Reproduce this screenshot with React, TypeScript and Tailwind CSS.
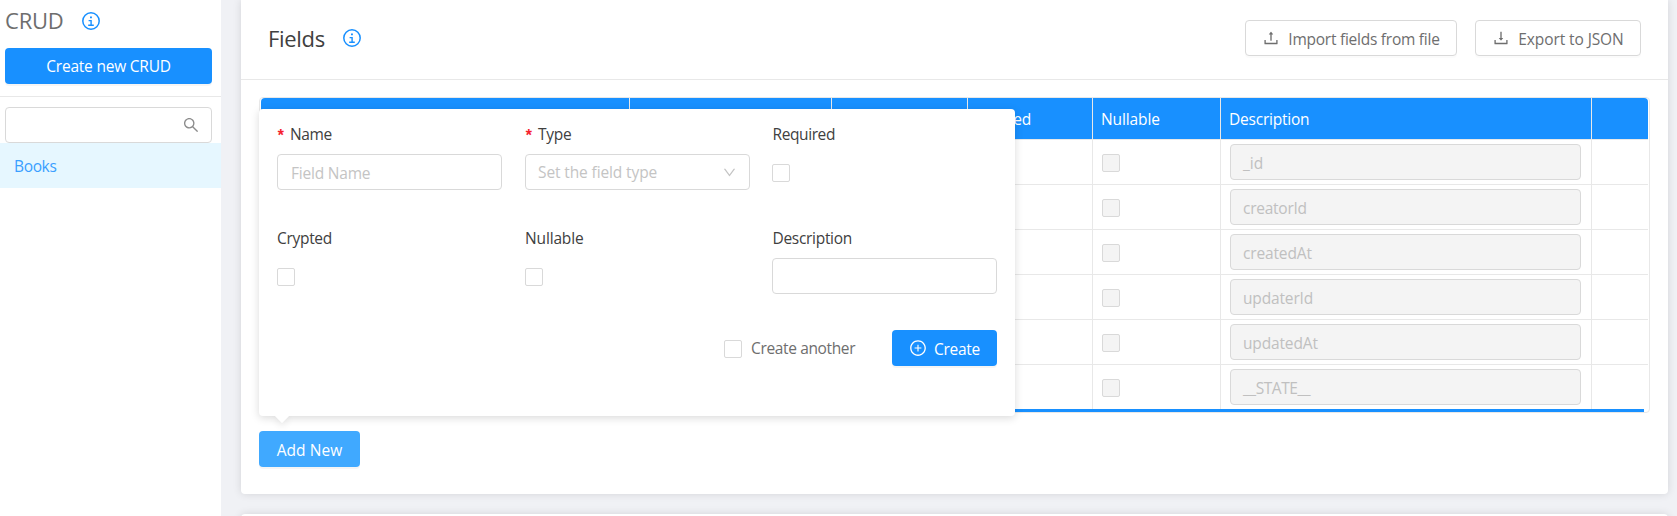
import type { ReactNode } from "react";
import {
  AiOutlineDown,
  AiOutlineDownload,
  AiOutlinePlusCircle,
  AiOutlineSearch,
  AiOutlineUpload,
} from "react-icons/ai";

const rows = [
  { name: "_id", tracking: "" },
  { name: "creatorId", tracking: "tracking-[-0.25px]" },
  { name: "createdAt", tracking: "tracking-[-0.15px]" },
  { name: "updaterId", tracking: "tracking-[-0.15px]" },
  { name: "updatedAt", tracking: "tracking-[-0.15px]" },
  { name: "__STATE__", tracking: "tracking-[-0.45px]" },
];

const columns = "grid grid-cols-[369px_202px_136px_125px_128px_371px_56px]";

const headers = [
  { id: "name", label: "", tracking: "" },
  { id: "type", label: "", tracking: "" },
  { id: "required", label: "", tracking: "" },
  { id: "crypted", label: "Crypted", tracking: "tracking-[-0.3px]" },
  { id: "nullable", label: "Nullable", tracking: "tracking-[-0.1px]" },
  { id: "description", label: "Description", tracking: "tracking-[-0.22px]" },
  { id: "actions", label: "", tracking: "" },
];

function InfoIcon() {
  return (
    <svg className="size-[18px] text-[#1890ff]" viewBox="0 0 18 18" fill="none" stroke="currentColor">
      <circle cx="9" cy="9" r="8.2" strokeWidth="1.5" />
      <path d="M8 5.4h1.9" strokeWidth="1.8" />
      <path d="M6.6 8.6h2.5v4.6M6.2 13.2h5.6" strokeWidth="1.4" />
    </svg>
  );
}

function Checkbox({ disabled = false }: { disabled?: boolean }) {
  return (
    <span
      role="checkbox"
      aria-checked="false"
      className={`block size-[18px] shrink-0 rounded-[2px] border border-[#d9d9d9] ${disabled ? "bg-[#f4f4f4]" : "bg-white"}`}
    />
  );
}

function OutlineButton({ icon, children }: { icon: ReactNode; children: ReactNode }) {
  return (
    <button className="flex h-9 items-center gap-[7px] rounded-[4px] border border-[#d9d9d9] bg-white px-4 whitespace-nowrap text-[#6e6e6e] shadow-[0_2px_0_rgba(0,0,0,0.016)]">
      {icon}
      {children}
    </button>
  );
}

function Field({ label, required = false, children }: { label: ReactNode; required?: boolean; children: ReactNode }) {
  return (
    <div className="h-[104px]">
      <div className="mb-0.5 flex h-9 items-center text-[#404040]">
        {required && (
          <span className="w-[13px] pt-[6px] font-['Liberation_Mono'] text-[16px] font-bold text-[#f5222d]">
            <span className="-ml-[1px]">*</span>
          </span>
        )}
        {label}
      </div>
      {children}
    </div>
  );
}

function FieldPopover() {
  return (
    <div className="absolute bottom-[51px] left-0 h-[307px] w-[756px]">
      <div className="absolute -bottom-[5px] left-[18px] size-[10px] rotate-45 bg-white shadow-[3px_3px_7px_rgba(0,0,0,0.07)]" />
      <div className="relative h-full rounded-[4px] bg-white px-[18px] pt-[7px] shadow-[0_2px_9px_rgba(0,0,0,0.15)]">
        <div className="absolute -bottom-[5px] left-[18px] size-[10px] rotate-45 bg-white" />
        <div className="relative grid grid-cols-[248px_247px_225px]">
          <Field label={<span className="tracking-[-0.35px]">Name</span>} required>
            <div className="flex h-9 w-[225px] items-center rounded-[4px] border border-[#d9d9d9] px-[13px] pt-0.5 tracking-[-0.2px] text-[#c4c4c4]">
              Field Name
            </div>
          </Field>
          <Field label={<span className="tracking-[-0.3px]">Type</span>} required>
            <div className="flex h-9 w-[225px] items-center justify-between rounded-[4px] border border-[#d9d9d9] pr-[12px] pl-[12px] tracking-[-0.12px] text-[#c4c4c4]">
              Set the field type
              <AiOutlineDown className="size-[15px]" />
            </div>
          </Field>
          <Field label={<span className="pl-[0.5px] tracking-[-0.4px]">Required</span>}>
            <div className="pt-2.5">
              <Checkbox />
            </div>
          </Field>
          <Field label={<span className="tracking-[-0.3px]">Crypted</span>}>
            <div className="pt-2.5">
              <Checkbox />
            </div>
          </Field>
          <Field label={<span className="tracking-[-0.15px]">Nullable</span>}>
            <div className="pt-2.5">
              <Checkbox />
            </div>
          </Field>
          <Field label={<span className="pl-[0.5px] tracking-[-0.3px]">Description</span>}>
            <div className="h-9 w-[225px] rounded-[4px] border border-[#d9d9d9]" />
          </Field>
        </div>
        <div className="mt-1.5 flex h-9 items-center justify-end">
          <div className="flex items-center gap-[9px] pr-[37px] text-[#6e6e6e]">
            <div className="pt-0.5">
              <Checkbox />
            </div>
            <span className="w-[104px] tracking-[-0.36px] whitespace-nowrap">Create another</span>
          </div>
          <button className="flex h-9 w-[105px] items-center gap-[7px] rounded-[4px] bg-[#1890ff] pl-[17px] font-normal text-white shadow-[0_2px_0_rgba(0,0,0,0.04)]">
            <AiOutlinePlusCircle className="size-[18px]" />
            <span className="pt-0.5 tracking-[-0.3px]">Create</span>
          </button>
        </div>
      </div>
    </div>
  );
}

function FieldsTable() {
  return (
    <div className="h-[316px] w-[1391px] rounded-[4px] border border-[#e8e8e8]">
      <div className="px-px">
        <div className={`${columns} h-[42px] overflow-hidden rounded-t-[4px] border-b border-[#e8e8e8] bg-[#1890ff] text-white`}>
          {headers.map((h) => (
            <div key={h.id} className="flex items-center border-r border-[#e8e8e8] pt-px pl-[8px] last:border-r-0">
              <span className={h.tracking}>{h.label}</span>
            </div>
          ))}
        </div>
        {rows.map((row) => (
          <div key={row.name} className={`${columns} h-[45px] border-b border-[#e8e8e8] last:h-[44px] last:border-b-0`}>
            {headers.map((h) => (
              <div key={h.id} className="flex items-center border-r border-[#e8e8e8] pr-[10px] pl-[9px] last:border-r-0">
                {h.id === "description" && (
                  <div className="flex h-9 w-full items-center rounded-[4px] border border-[#d9d9d9] bg-[#f4f4f4] px-3 pt-0.5 text-[#c0c0c0]">
                    <span className={row.tracking}>{row.name}</span>
                  </div>
                )}
                {(h.id === "nullable" || h.id === "crypted" || h.id === "required") && (
                  <div className="pt-0.5">
                    <Checkbox disabled />
                  </div>
                )}
              </div>
            ))}
          </div>
        ))}
      </div>
      <div className="h-[3px] w-[1384px] bg-[#1890ff]" />
    </div>
  );
}

export default function App() {
  return (
    <div className="flex h-[516px] w-[1677px] overflow-hidden bg-[#f0f1f5] font-['Open_Sans',sans-serif] text-[15.5px] leading-6">
      <aside className="w-[221px] shrink-0 bg-white">
        <div className="h-[97px] border-b border-[#e8e8e8] pr-[9px] pl-[5px]">
          <div className="flex h-12 items-start pt-3">
            <h1 className="-mt-px w-[77px] text-[22px] leading-[18px] tracking-[-0.2px] text-[#6e6e6e]">CRUD</h1>
            <InfoIcon />
          </div>
          <button className="h-9 w-full rounded-[4px] bg-[#1890ff] tracking-[-0.22px] text-white shadow-[0_2px_0_rgba(0,0,0,0.04)]">
            Create new CRUD
          </button>
        </div>
        <div className="pt-2.5 pr-[9px] pl-[5px]">
          <div className="flex h-9 items-center justify-end rounded-[4px] border border-[#d9d9d9] pr-[11px]">
            <AiOutlineSearch className="size-[18px] text-[#8c8c8c]" />
          </div>
        </div>
        <div className="flex h-[45px] items-center bg-[#e6f7ff] pt-px pl-[14px] tracking-[-0.35px] text-[#3a9fff]">Books</div>
      </aside>
      <main className="pl-5">
        <section className="h-[494px] w-[1427px] rounded-b-[4px] bg-white shadow-[0_0_9px_rgba(0,0,0,0.12)]">
          <div className="flex h-20 items-start justify-between border-b border-[#e8e8e8] pr-[27px] pl-[27px]">
            <div className="flex pt-[29px]">
              <h2 className="-mt-px w-[75px] text-[22px] leading-[20px] tracking-[-0.3px] text-[#404040]">Fields</h2>
              <InfoIcon />
            </div>
            <div className="flex gap-[18px] pt-5">
              <OutlineButton icon={<AiOutlineUpload className="size-[18px]" />}>
                <span className="w-[153px] pt-0.5 pl-px tracking-[-0.25px]">Import fields from file</span>
              </OutlineButton>
              <OutlineButton icon={<AiOutlineDownload className="size-[18px]" />}>
                <span className="w-[107px] pt-0.5 pl-px tracking-[-0.1px]">Export to JSON</span>
              </OutlineButton>
            </div>
          </div>
          <div className="px-[18px] pt-[17px]">
            <FieldsTable />
            <div className="relative mt-[18px] w-[101px]">
              <button className="h-9 w-full rounded-[4px] bg-[#40a9ff] pt-0.5 tracking-[0.05px] text-white shadow-[0_2px_0_rgba(0,0,0,0.04)]">
                Add New
              </button>
              <FieldPopover />
            </div>
          </div>
        </section>
        <section className="mt-5 h-10 w-[1427px] rounded-[4px] bg-white shadow-[0_0_9px_rgba(0,0,0,0.12)]" />
      </main>
    </div>
  );
}
